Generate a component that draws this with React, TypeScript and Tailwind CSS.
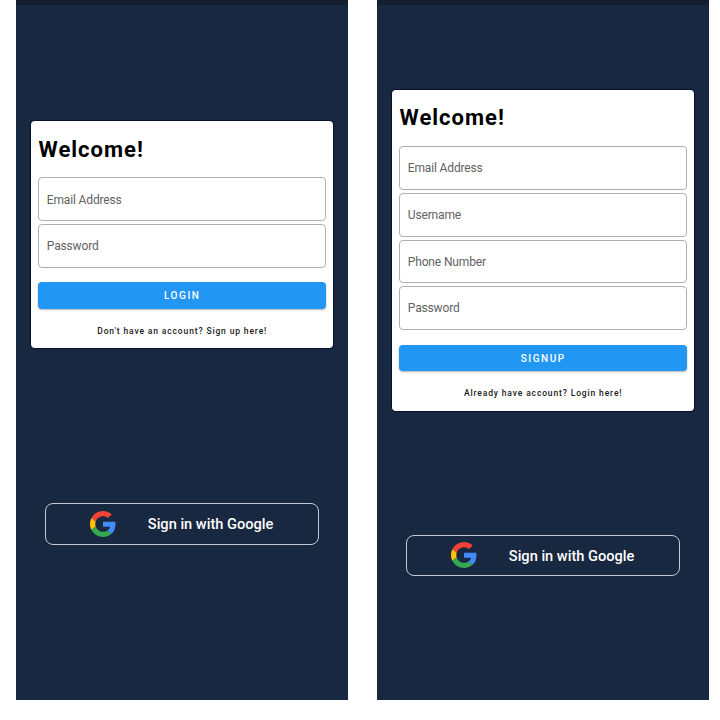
import React from "react";

function GoogleLogo() {
  return (
    <svg viewBox="0 0 48 48" className="h-[26px] w-[26px] shrink-0" aria-hidden="true">
      <path fill="#F44336" d="M24 9.5c3.54 0 6.71 1.22 9.21 3.6l6.85-6.85C35.9 2.38 30.47 0 24 0 14.62 0 6.51 5.38 2.56 13.22l7.98 6.19C12.43 13.72 17.74 9.5 24 9.5z" />
      <path fill="#448AFF" d="M46.98 24.55c0-1.57-.15-3.09-.38-4.55H24v9.02h12.94c-.58 2.96-2.26 5.48-4.78 7.18l7.73 6c4.51-4.18 7.09-10.36 7.09-17.65z" />
      <path fill="#FFC107" d="M10.53 28.59c-.48-1.45-.76-2.99-.76-4.59s.27-3.14.76-4.59l-7.98-6.19C.92 16.46 0 20.12 0 24c0 3.88.92 7.54 2.56 10.78l7.97-6.19z" />
      <path fill="#34A853" d="M24 48c6.48 0 11.93-2.13 15.89-5.81l-7.73-6c-2.15 1.45-4.92 2.3-8.16 2.3-6.26 0-11.57-4.22-13.47-9.91l-7.98 6.19C6.51 42.62 14.62 48 24 48z" />
    </svg>
  );
}

function Field({ label }: { label: string }) {
  return (
    <div className="flex h-[43.7px] items-center rounded-[4px] border border-[#b0b0b0] pt-[0.6px] pl-2 text-[12px] tracking-[-0.15px] text-[#626262]">
      {label}
    </div>
  );
}

type ScreenProps = {
  fields: string[];
  action: string;
  prompt: string;
  spacing: string;
};

function Screen({ fields, action, prompt, spacing }: ScreenProps) {
  return (
    <section className={`h-[700px] w-[332px] bg-[#192841] ${spacing}`}>
      <div className="h-[4.5px] bg-[#141e2f]" />
      <div className="mt-(--card-top) ml-[14.5px] w-[302.9px] rounded-[4px] bg-white px-[7.3px] pt-[14.5px] pb-[10.5px] shadow-[0_0_1px_1px_#08112d]">
        <h1 className="h-[41.9px] pl-[0.7px] text-[22px] leading-[27px] font-bold tracking-[1px] text-black">
          Welcome!
        </h1>
        <div className="flex flex-col gap-[3px]">
          {fields.map((label) => (
            <Field key={label} label={label} />
          ))}
        </div>
        <button className="mt-[14.6px] flex h-[26.6px] w-full items-center justify-center rounded-[4px] bg-[#2196f3] pt-[0.5px] pl-[0.5px] text-[10px] font-medium tracking-[1.55px] text-white shadow-[0_1px_2px_#0000004d]">
          {action}
        </button>
        <p className="mt-[16px] pl-[0.5px] text-center text-[8.5px] leading-[13px] font-medium tracking-[0.86px] whitespace-nowrap text-[#202020]">
          {prompt}
        </p>
      </div>
      <button className="mt-(--google-top) ml-[28.5px] flex h-[41.5px] w-[274.9px] items-center rounded-[8px] border border-[#c6cbd3] pl-[44px] text-[14.6px] font-medium text-white">
        <GoogleLogo />
        <span className="ml-[32.3px] pt-[2px] whitespace-nowrap">Sign in with Google</span>
      </button>
    </section>
  );
}

export default function App() {
  return (
    <main className="flex h-[720px] w-[720px] gap-[29px] overflow-hidden bg-white pl-4 font-[Roboto,sans-serif]">
      <Screen
        fields={["Email Address", "Password"]}
        action="LOGIN"
        prompt="Don't have an account? Sign up here!"
        spacing="[--card-top:116.5px] [--google-top:155px]"
      />
      <Screen
        fields={["Email Address", "Username", "Phone Number", "Password"]}
        action="SIGNUP"
        prompt="Already have account? Login here!"
        spacing="[--card-top:85.3px] [--google-top:124.1px]"
      />
    </main>
  );
}
